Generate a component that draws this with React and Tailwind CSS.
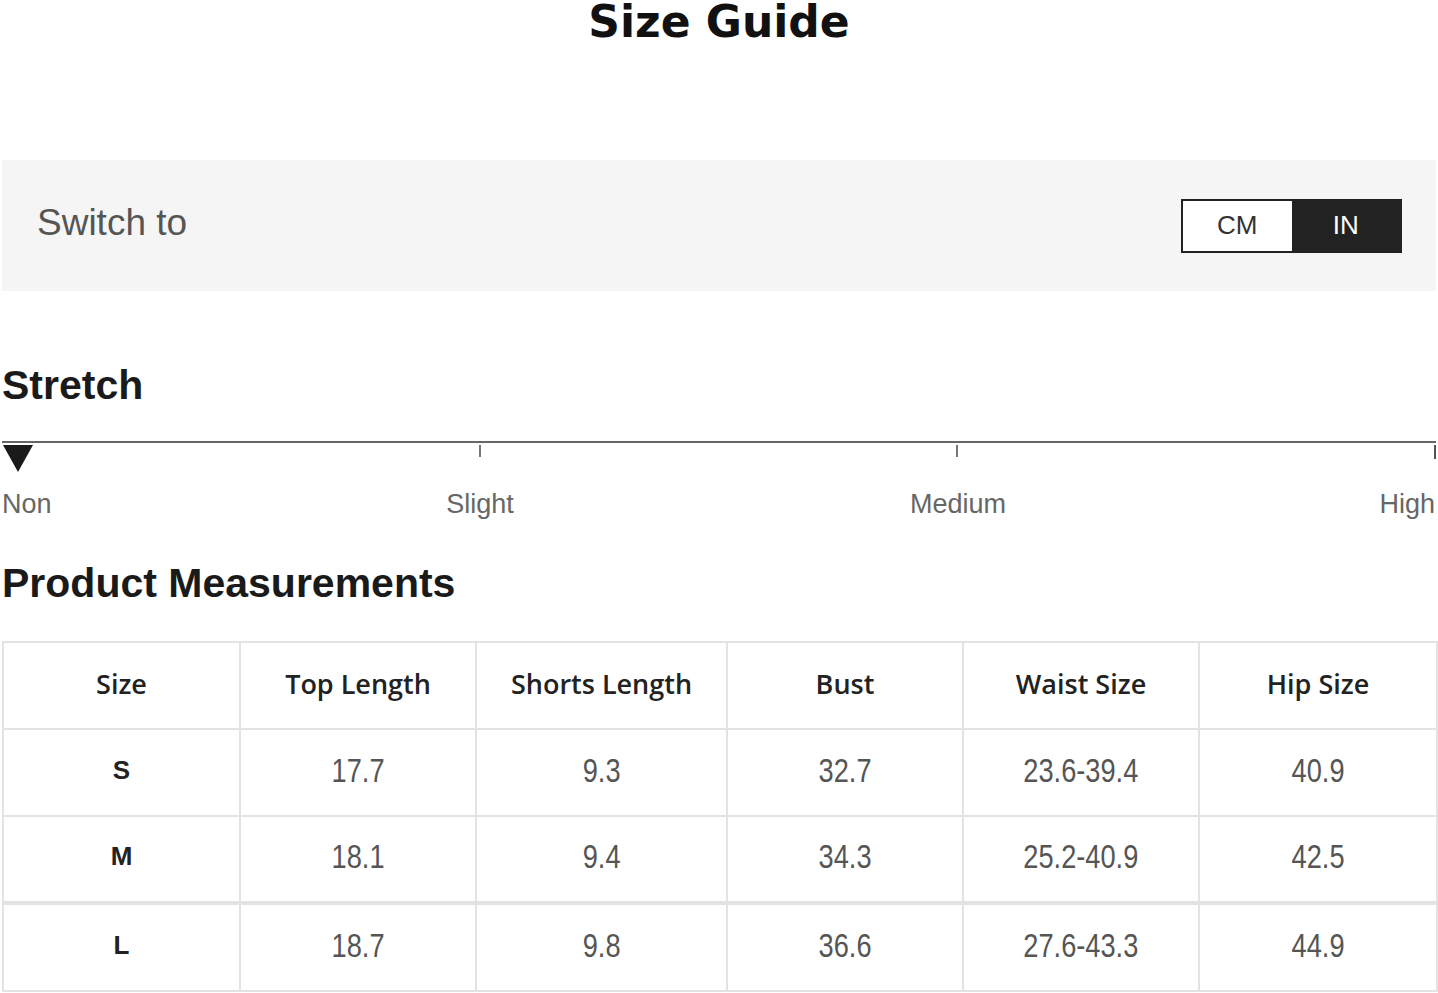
const rows = [
    { size: 'S', top: '17.7', shorts: '9.3', bust: '32.7', waist: '23.6-39.4', hip: '40.9' },
    { size: 'M', top: '18.1', shorts: '9.4', bust: '34.3', waist: '25.2-40.9', hip: '42.5' },
    { size: 'L', top: '18.7', shorts: '9.8', bust: '36.6', waist: '27.6-43.3', hip: '44.9' },
];

const headers = ['Size', 'Top Length', 'Shorts Length', 'Bust', 'Waist Size', 'Hip Size'];

const StretchScale = () => (
    <div className="mt-[35px]">
        <div className="relative h-[50px] border-t-2 border-[#666]">
            <svg className="absolute left-[1px] top-[2px]" width="30" height="27" viewBox="0 0 30 27">
                <path d="M0 0 L30 0 L15 27 Z" fill="#1a1a1a" />
            </svg>
            <div className="absolute left-[477px] top-[2px] h-[12px] w-[2px] bg-[#777]" />
            <div className="absolute left-[954px] top-[2px] h-[12px] w-[2px] bg-[#777]" />
            <div className="absolute right-0 top-[2px] h-[14px] w-[2px] bg-[#555]" />
        </div>
        <div className="grid grid-cols-6 text-[27px] leading-[27px] text-[#666]">
            <span className="text-left">Non</span>
            <span className="col-span-2 text-center">Slight</span>
            <span className="col-span-2 text-center">Medium</span>
            <span className="text-right pr-[1px]">High</span>
        </div>
    </div>
);

export default function App() {
    return (
        <div className="w-[1438px] h-[993px] overflow-hidden bg-white px-[2px] font-['Liberation_Sans',sans-serif]">
            <div className="h-[160px]">
                <h1 className="text-center text-[44px] leading-[44px] font-bold text-[#111] font-['DejaVu_Sans',sans-serif]">
                    Size Guide
                </h1>
            </div>

            <div className="flex h-[131px] items-center justify-between bg-[#f5f5f5] pl-[35px] pr-[34px]">
                <span className="pb-[5px] text-[37px] text-[#555]">Switch to</span>
                <div className="flex h-[54px] w-[221px] border-2 border-[#222] text-[26px]">
                    <div className="flex flex-1 items-center justify-center bg-white text-[#333]">CM</div>
                    <div className="flex flex-1 items-center justify-center bg-[#222] text-white">IN</div>
                </div>
            </div>

            <h2 className="mt-[74px] text-[41px] leading-[41px] font-bold text-[#1a1a1a]">Stretch</h2>

            <StretchScale />

            <h2 className="mt-[45px] text-[41px] leading-[41px] font-bold text-[#1a1a1a]">Product Measurements</h2>

            <table className="mt-[37px] w-[1434px] table-fixed border-collapse border-2 border-[#e3e3e3]">
                <colgroup>
                    <col className="w-[237px]" />
                    <col className="w-[236px]" />
                    <col className="w-[251px]" />
                    <col className="w-[236px]" />
                    <col className="w-[236px]" />
                    <col className="w-[238px]" />
                </colgroup>
                <thead>
                    <tr className="h-[87px]">
                        {headers.map((h) => (
                            <th
                                key={h}
                                className="border-2 border-[#e3e3e3] pb-[2px] text-center text-[27px] font-semibold text-[#222] font-['Open_Sans',sans-serif]"
                            >
                                {h}
                            </th>
                        ))}
                    </tr>
                </thead>
                <tbody>
                    {rows.map((r, i) => (
                        <tr key={r.size} className={i === 2 ? 'h-[88px] border-t-[4px] border-[#e3e3e3]' : 'h-[87px]'}>
                            <td className="border-2 border-[#e3e3e3] pb-[5px] text-center text-[26px] font-bold text-[#222]">
                                {r.size}
                            </td>
                            {[r.top, r.shorts, r.bust, r.waist, r.hip].map((v, j) => (
                                <td key={j} className="border-2 border-[#e3e3e3] pb-[5px] text-center text-[34px] text-[#555]">
                                    <span className="inline-block scale-x-[0.8]">{v}</span>
                                </td>
                            ))}
                        </tr>
                    ))}
                </tbody>
            </table>
        </div>
    );
}
